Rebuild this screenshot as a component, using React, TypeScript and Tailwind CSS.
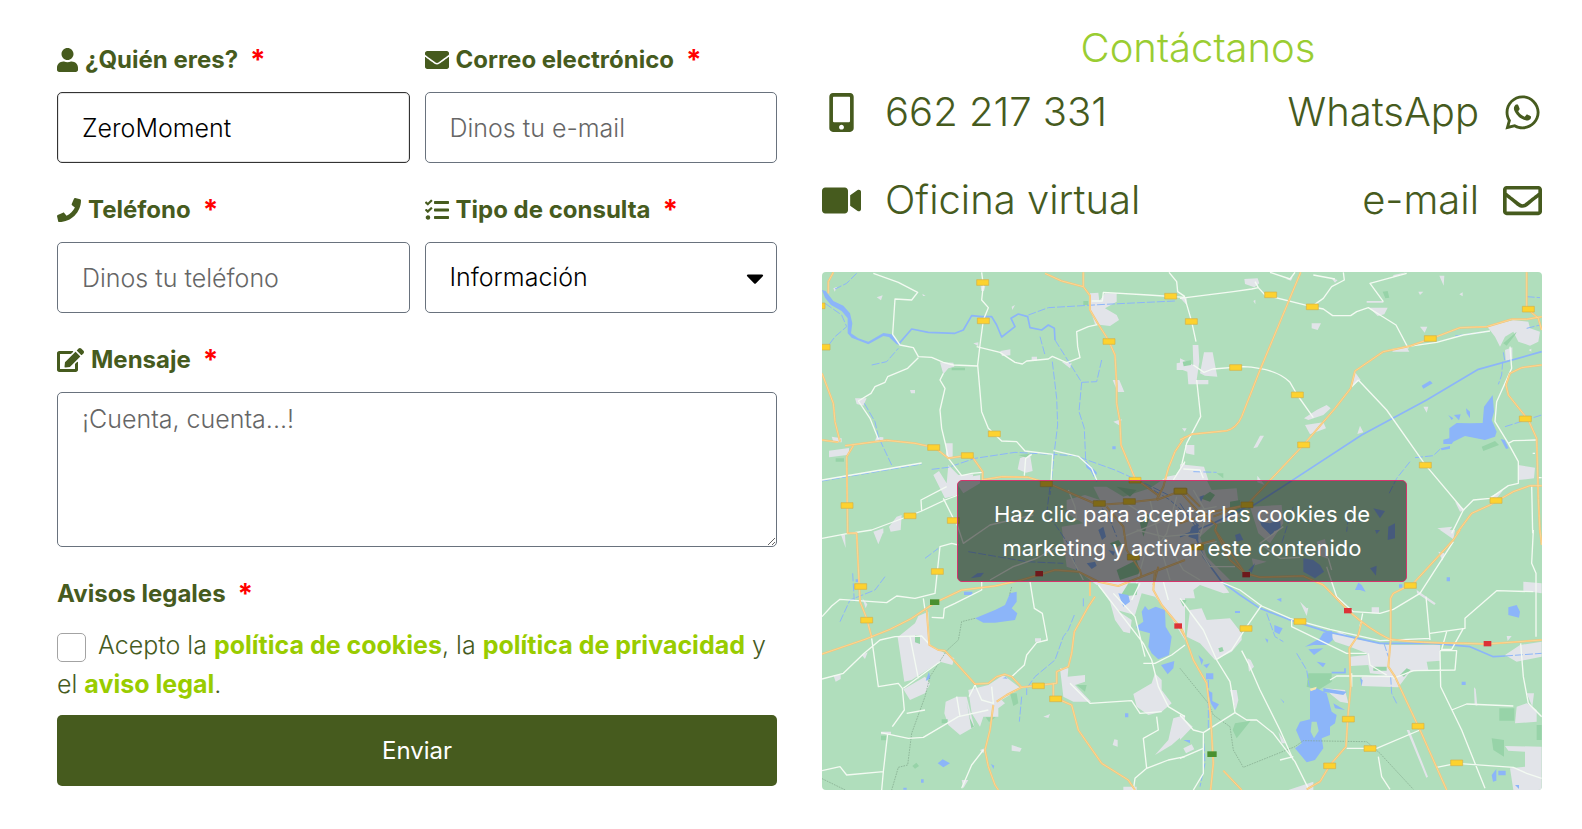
import { useState } from "react";
import type { FormEvent, ReactNode } from "react";
import {
  FaCaretDown,
  FaEdit,
  FaEnvelope,
  FaMobileAlt,
  FaPhone,
  FaRegEnvelope,
  FaTasks,
  FaUser,
  FaVideo,
  FaWhatsapp,
} from "react-icons/fa";

interface MapTile {
  id: string;
  at: string;
  urban: string;
  park: string;
  water: string;
  canal: string;
  rail?: string;
  road: string;
  highway: string;
  badges: [number, number][];
  red?: [number, number][];
  green?: [number, number][];
}

// the map is drawn tile by tile, every tile with its own origin
const tiles: MapTile[] = [
  {
    id: "nw",
    at: "translate(-21 -21)",
    urban:
      "M825 85L850 83L853 108L870 85L905 85V110L870 130L905 150L912 165L885 183L840 178L822 120ZM375 292L415 293L418 305L400 310L385 328ZM556 258l30-5v18l-25 2zM650 275h16v12h-16zM740 290l30 5-5 15zM893 345h20l15 36h-20zM1085 295l25-5v25h-25zM120 400h35l-10 22-20-5zM185 515l20 2v10h-25zM50 515l30 5v12l-25-2zM42 557l60-8v20l-60 8zM393 535h20v45l-20-5zM355 630L372 618L395 655L400 600L430 630L475 628L470 650L430 655L428 690L390 700ZM615 580l30-12 8 50-20 5-25-10zM185 97l18-6-5 15zM322 86l10 7h-8zM590 125l10-5-8 15zM285 375h15v10h-12zM245 755l15-5-3 45-30 5-5-15zM175 800l30-10v15zM1075 640L1110 590V660H1060ZM475 235l15-3v12zM497 62h14l-4 16h-8zM55 70l12-5-8 15zM895 470l25-8-5 20z",
    park: "M410 308h40v8h-40zM805 108h15v12h-15zM62 580h25v10h-25zM610 570l35-4-10 12z",
    water:
      "M21 75L32 78L55 108L85 122L105 145L112 175L108 205L130 220L160 230L205 204L230 208L258 240L245 238L222 216L205 213L160 238L110 218L98 205L98 160L80 138L48 120L30 98ZM808 585L845 622V630L815 608ZM892 544h10v9h-10z",
    canal:
      "M250 238L290 192L340 202L420 205L445 195L470 152L500 155L530 155L545 180L560 216L600 185L588 160L610 147L638 155L645 188L680 195L700 180L718 190L720 225",
    rail: "M720 225L800 352L792 440L808 490L812 585L845 650M21 648L320 597M350 613L400 607L480 580L600 562L780 572L900 615L1000 660L1060 690M712 290L725 400L728 480L718 560L705 690M640 150L700 128L870 118L1080 108M675 215L690 270M148 415L180 470L190 515L230 600M30 115L80 150L95 185L60 215L30 255M170 300L215 290L250 250M125 25L95 55L60 72M860 285L845 350L800 352",
    road: "M175 25L250 52L308 82L290 105L240 102L233 208L255 240L295 248L310 275L350 277L385 292L415 300L488 303M310 278L278 310L218 335L210 352L180 365L168 385L130 408L165 460L190 522M500 22L505 60L500 105L520 128L505 165L495 240L488 300L495 380L500 440L520 490L560 528L605 530L630 558L715 568M485 245L555 262L600 292L622 297L635 288L700 282L712 274L755 293L795 278L788 245L785 200L820 185L850 178M385 325L375 345L390 370L375 435L380 490L392 540L400 580L440 632L470 625L503 622M713 568L708 650M715 557L790 574L830 610L845 645M1062 22L1085 50L1088 80L1110 95M830 108H862L865 82L1000 90L1110 97M650 568L632 580L628 632M395 665L318 705L320 738L250 765L170 795L100 806M320 738L390 705L430 690M385 700L415 760M1110 590L1075 645M21 645L320 594",
    highway:
      "M55 22L40 50V85M21 325L55 415L60 470L75 530M21 525L70 532M90 542L215 526L300 535L360 548L400 580L450 572L475 580L503 620V648M115 542L95 575L98 806M690 25L740 48L805 65L825 92L825 135L850 178L880 225L900 270L905 360L905 415L915 470L918 540L960 640L1035 695M805 22V65M500 645L560 635L640 637L700 655L780 690L850 720L920 715L1025 703L1045 665L1060 610L1080 560L1110 515",
    badges: [[503, 52], [505, 167], [882, 229], [538, 506], [356, 547], [457, 571], [1067, 93], [960, 645], [96, 721], [285, 752], [415, 766], [12, 122], [27, 246], [694, 656], [853, 715], [943, 709], [1098, 678]],
  },
  {
    id: "ne",
    at: "translate(1074 -21)",
    urban:
      "M193 42l40-2 5 15-15 12-28-10zM318 42l20-5-5 10zM455 40l18 5-8 8zM640 30l40-8-40 15zM568 128l55 0-10 20-20 5zM560 108h50v5h-50zM778 32h15l-2 30zM395 175l28 0-10 20-18-5zM720 185h22l-8 18zM922 185L1000 165L1045 170L1050 190L1080 200L1075 230L1050 242L1015 230L1000 200L975 215L960 245L945 215ZM975 255l22-8v35l-20 5zM38 240L55 240L58 290L50 345L85 345V358L25 358L22 320L0 312V280L40 300ZM72 262L98 262L112 335L75 332L60 325ZM524 320l18 25-28 18zM635 252l45-6 8 14-50 0zM372 460L410 435L440 420L452 430L430 450L385 465ZM375 480L430 472L438 490L390 508ZM540 482l10 20-18 5zM220 550l20-38 12 0-20 35zM15 540h28v30l-25-5zM0 598L72 605L85 645H0ZM1015 600L1065 608L1062 640L1015 645ZM825 710l30 25-15 5zM930 695l40-20-20 25zM772 790l45-5-15 20zM0 98l20 2v20zM730 425h15l-5 18zM232 632l22 28-22-8zM715 80h15l-10 10zM838 88l10-6v12zM1046 255l8-4v9zM220 108l6-4v14zM6 490h14l-6 10z",
    park: "M905 545L945 528L957 540L910 558ZM608 80l15-2 5 20-12 2zM8 290l25-4v14l-22 4zM970 235l40-35-5 10-25 32z",
    water:
      "M808 490L830 474L870 475L908 474L912 425L938 390L942 440L935 465L950 500L945 515L915 525L855 513L820 530L815 537L790 537V524L808 520ZM725 362l25-15 8 8-28 16zM782 550l28-7v8l-25 5zM858 430l12 10v20l-10-15zM805 450l15 10-5 5zM822 450l20-2-5 18zM962 522l12 3 12 25-8 2z",
    canal: "M205 730L225 718L300 670L545 510L740 405L895 313L1085 260",
    rail: "M968 290L965 330L955 358M970 262L975 290M975 485L1085 450M690 590L650 640L625 690M705 578L760 572L785 548M825 213L920 200M1040 190L1080 180M40 620L110 622M1040 95L1080 98",
    road: "M0 100L160 80L215 72L235 68L225 50M235 68L255 90L395 125L430 132L458 152H512L530 140L565 128L600 150L648 180L685 250M270 22L330 42L345 22M395 125L430 100L455 65L493 45L490 22M400 30L465 42M680 25L570 55L610 110M15 100L35 170L48 230M50 345L62 455L20 535L5 600M98 312L190 305Q290 310 330 352L352 390L400 458M535 345L620 435L735 598L850 735L815 805M515 365L535 345M680 245L770 232L850 210L930 198M990 245L995 310L950 410L945 470L985 535L1015 590V655L985 662L930 700L880 705L850 735M985 535L1000 527L1068 525M1055 660L1058 805M40 300L72 322L98 312M1065 565H1058M1075 638h10M10 612L60 615L70 640",
    highway:
      "M362 22L240 315L185 455Q170 490 140 497L35 508L0 525M830 805L875 745L930 720L1000 680L1050 662H1085M1040 22V130L1075 160L1085 195M1085 155L1040 163L995 163L920 185L840 188L770 215L690 243L610 260L525 318L512 370L465 430L372 538L205 715L100 755M1085 300L1025 308L990 325L978 360L985 390L1045 465L1070 520L1075 700L1080 805",
    badges: [[272, 89], [397, 125], [34, 169], [167, 307], [352, 389], [371, 539], [751, 220], [1045, 132], [1036, 461], [736, 600], [948, 706], [201, 719]],
  },
  {
    id: "centre-w",
    at: "translate(384 594)",
    urban:
      "M405 75L450 90L430 50L470 50L520 80L600 55L650 20L750 0V345H440L380 300L350 290L335 170L400 160L350 130V90ZM20 40L60 20L90 15V40L40 70Z",
    park: "M500 300l60-30 12 40-62 20zM500 50l60 10-20 20zM570 160l20-30 10 10-20 60zM480 220l25-10 10 12-20 15zM640 125l25 15-8 12z",
    water: "M445 180l15-10 8 30-12 10zM62 325l20-15 20-2-10 12zM410 280l25-5 5 12-15 10zM475 240l20 5-5 12zM725 170l20-10v50l-30-10z",
    canal: "",
    rail: "M300 50L290 130L320 170L360 230L380 300M440 90L480 150L500 200M560 30L660 90L750 170M55 245L230 275L340 280",
    road: "M20 160L40 220L120 165L250 135M120 330L190 290L260 265L330 225M355 60L375 110L380 150M560 180L640 200L750 190M600 90L640 260L660 330M520 200L620 160L700 120M640 200L700 300L750 330M590 230L560 340M530 100L620 160M680 80L650 190L600 260M350 235L400 330",
    highway: "M470 110L520 170L530 240L570 300L575 320M620 90L700 60L750 110M610 345L625 290",
    badges: [[690, 63], [550, 261]],
  },
  {
    id: "centre-e",
    at: "translate(1074 594)",
    urban:
      "M0 0L70 10L95 60L170 55L180 140L100 165L60 200L80 260L150 330L0 345ZM210 110L305 105L310 160L270 220L235 190ZM410 215l25-8 10 60-25-10zM215 265l45 10-40 12z",
    park: "M60 85l30-20 15 10-15 20zM110 10l20 0 0 15zM150 95l30-5v40l-30 5z",
    water: "M240 155l30 5 30-12 3 30-20 5-8 15-30-30zM165 195l15-5 10 20-20 5zM580 115l35 8-15 22zM625 170l20-10v45l-22 5zM585 180l15 0-10 12zM58 80l15-5-10 20zM570 295l20-8-2 30zM205 300l20-20-10 28z",
    canal: "M0 200L100 160L200 110M40 180L70 260L125 335",
    rail: "M340 110L305 220M0 100L60 190M505 140L500 185",
    road: "M40 60L80 130L60 200M0 130L110 110M110 215L50 225L90 290L165 290M310 170L240 220L300 265L360 262M445 265L455 300",
    highway: "M0 65L60 130L110 165L105 180L195 310M30 230L105 210M0 160L100 125L200 105",
    badges: [[1, 63], [52, 231]],
  },
  {
    id: "sw",
    at: "translate(-21 774)",
    urban:
      "M175 5h30l-15 38zM78 14h12l2 40zM248 322L300 280L310 258L340 245L345 345L390 370L418 385L412 405L375 395L290 450L268 455ZM265 478L330 440L345 462L330 490L285 510ZM142 205l10 30 5-12zM140 375l18-8-8 20zM55 435h22v12l-15 8zM392 515L425 500L455 500L478 590L435 615L400 585L388 550ZM460 480L520 465L565 435L617 475L560 510L570 520L550 535V560L505 560L495 590L470 550ZM735 415H760L758 440L810 435V455L780 465L828 515L775 515L745 500ZM955 492L1010 460L1020 430L1040 450L1040 480L1070 520L1040 545L1000 555L965 530ZM1075 565L1110 555V610L1070 645L1020 675L1060 630ZM590 645l30 10-5 10-25-3zM898 628l10 2v20l-15-5zM685 560l20-8-5 12zM495 660l15-5-5 15zM660 325h18v10h-18zM850 165L890 165L905 240L950 270L945 310L925 305L900 270L885 215ZM890 165L1110 155V330L1060 250L1020 200L980 190L960 255L905 240ZM198 605h30v8h-30zM925 770h40v15h-40zM440 750h20l-15 25z",
    park: "M300 315l15 2v25l-15-5zM940 160h30l-5 35-50 5zM585 490h20l5 30-15 8zM785 465h30l-5 20zM455 515l10 50 12 25-8 5zM292 708l12-10 8 10-12 8zM380 568h18v12h-18zM198 617h18v14h-18zM512 562h30l-20 14z",
    water:
      "M480 265L540 240L570 225L585 190L605 185V215L590 235L607 250L600 270L540 278L505 278ZM447 185h25v10h-25zM963 290L985 275L980 245L990 228L1000 240L1022 230L1050 240L1052 290L1070 320L1062 375L1030 388L1010 370L1000 350L1005 310L970 300ZM1038 405l40-12-3 22-17 18zM910 190l30 5 5 20-20 15zM368 700l15-12 22 12-20 12zM930 550h10v12h-10zM342 425l4 20-14 8zM528 702l10 5-3 10zM562 445l10-4 6 5zM318 748h8v10h-8zM265 773h10v6h-10zM122 148h12v8h-12z",
    canal: "",
    rail: "M778 255L760 300L745 320L720 390L660 440L635 475M620 500L613 575M635 475V495M113 130L118 215M210 140L180 180M75 275L105 210L180 180M330 85L370 55M805 205V235",
    road: "M21 25L100 10M21 260L50 228L75 208L215 218L245 198L300 205L360 190L375 50L410 40L430 45M350 262L385 264L388 235L420 220L500 180V155M325 205L330 240M21 447L85 430L145 372L195 330L240 320L320 318L345 345M170 325L190 470L250 460L262 475L268 540L232 590M265 475L375 395M285 320L310 445M645 155L658 235L682 250L697 330L665 338L635 375L628 405L590 440M198 608L280 625L325 622L400 578L430 560L520 540M218 610L205 725L200 780M205 725L95 735L75 710L21 722M480 465L500 510L535 520L530 470M462 500L480 465M425 500L435 560M505 660L470 705L440 775M275 550L330 540M765 460L825 520L950 512L975 550L1040 545M850 165L900 230L985 340L1010 390L1030 470L1060 530L1110 560M985 400H1020L1070 375L1110 345M1025 560L1030 600L985 625L995 715L960 745L955 780M995 715L1060 690L1110 680M895 190L960 260L990 380M950 210L975 160M1045 155L1060 210",
    highway:
      "M21 372L150 328L225 298L290 265L360 218L440 180L540 168L620 150L720 120L790 125L850 155L910 168L1000 132L1110 90M98 10H125L135 215L155 265L170 322M335 240L343 345L370 360L390 362L480 462L520 460L545 440L570 433L590 440L620 472L725 460V425L760 410L770 370L778 305L820 230L840 200M715 460V500M825 155V198M620 472L575 495L545 515M535 525L525 600L510 660L520 710L540 765L550 780M735 510L770 525L790 600L860 700L940 750L960 780M1020 120L1015 180L1040 225L1090 285L1110 320",
    badges: [[367, 124], [137, 169], [155, 270], [670, 467], [722, 506]],
    red: [[673, 131], [1090, 288]],
    green: [[359, 216]],
  },
  {
    id: "se",
    at: "translate(1074 774)",
    urban:
      "M0 155H125L148 188L130 190L60 165L40 180L45 205L0 205ZM30 240L65 235L80 270L150 265L185 310L185 330L155 365L105 390L60 340L20 320ZM202 385l10 5 10 20-15 15zM150 480h20l5 30-8 30zM0 555L38 590L0 630ZM10 655l25-12 8 15-25 12zM450 315L480 305L520 325L620 345L780 345L780 392L740 395L745 420L690 425L655 472L545 468V440L620 435L570 430L565 405L512 408L510 380L560 375V370L510 350L465 335ZM360 215l20 20 5-2-5 25zM575 232h22v18h-22zM975 375L1020 345L1085 335V380L1010 395ZM435 475L495 480L505 520L480 515L455 495ZM1030 155L1085 160V190L1030 182ZM780 0h45l-5 28zM775 65l18 5-5 22zM710 180l57 40-4 5-52-35zM1010 530L1040 520L1070 540V575L1005 580ZM975 648L1085 650V780H1000L990 715L1035 710V665L985 662ZM882 472l5 5 5 50-8-2zM980 318h15l-12 15zM680 600l8 0 56 140-5 3zM325 780L400 755V780ZM295 605l22 35-12 0zM1040 490l22 0-5 40z",
    park: "M385 430L455 430L455 455L415 480L380 470ZM958 535H1003V572H958ZM165 580L212 572L170 625L158 600ZM935 625L972 630V680L940 660ZM1070 585h15v45h-15zM580 410h40v12h-40zM115 355l12-4 4 12-12 4zM660 435l20-20 12 5-20 20zM0 210l20 0-10 20z",
    water:
      "M390 480L410 475L440 490L455 545L470 555L465 580L450 590V615L425 625L430 655L405 690L380 697L345 655L365 640L348 600L360 575L390 568ZM375 350L420 325L430 308L456 302L458 330L440 345L400 345ZM385 358l45-3-28 20zM985 232L1010 225L1020 245L1017 263L985 255ZM283 285l25 10-10 18-15-8zM525 180L535 158L545 165L557 185L540 180ZM78 430h22v18h-22zM82 480l15 8 0 25 20 10-12 18-12-20zM55 375l15 15-5 15zM300 505l12 10v5zM70 405l20-5-10 15zM800 142h10v12h-10zM845 455h12v10h-12zM955 722h22v14h-22zM935 735l14-18v35l-10 3zM165 243h15v6h-15zM10 630h20v10zM410 395l27 5-8 12zM370 85L400 90L420 105L432 125L405 145L370 125ZM430 475l70 10-10 10-60-10zM460 520l35 20-30-5zM540 443l8 8-3 18zM290 208l14-4v12zM255 325l10 4-3 10zM1005 765h12v12zM657 163h10v10h-10z",
    canal: "M125 155L180 195L240 235L325 268L440 305L600 340L760 340L870 350L940 380L975 378M455 428H495V415",
    rail: "M260 250L285 320L310 335M70 610L75 700L60 770M85 450V600M612 340L625 380M350 370L380 420L388 470M632 440L635 490L650 520M975 378L1085 370",
    road: "M0 205L70 300L110 390L150 455L165 548L200 570L230 570L280 610L345 695L385 775M120 155L180 180L245 228L330 265L450 298L600 332L750 325M335 270V290L500 370H560M245 225L200 290L155 360L110 388M185 362L205 400L240 480L300 600L340 690M165 548L70 608L40 600L0 555M70 610V730L40 780M440 110L470 200L520 245L600 250L640 238L720 190L820 35M548 250L540 290M738 200L750 330M750 310L855 295L855 265L950 182L1060 185M800 305L785 358H815L850 295M1060 0L1055 100L1068 130V320M780 362H830L825 420L700 422L640 445M780 362L782 470L845 600L915 775M815 540L860 522L1000 528M1022 340L1030 440L1045 520L1085 560M500 655H590L720 600M595 680L605 740L630 778M770 712L830 700L1000 712L1040 730L1085 745M450 450L470 438L560 438L640 440M515 430V470M565 370L570 405L620 435M0 685L70 655M300 690L340 680",
    highway:
      "M105 0L150 90L195 130L240 142L370 138L430 165L505 242Q570 300 630 328Q720 340 850 340L920 342L1085 330M0 285L15 320L40 390L80 460L92 560L100 700L92 780M840 0L820 30L700 160L640 190L632 205V330L625 410L645 440L720 600L800 780M545 275L535 315L508 355L512 470L503 570L498 650L450 705L420 755L380 778M130 722L185 780M1080 0L1085 45",
    badges: [[691, 166], [360, 274], [198, 295], [505, 567], [714, 588], [570, 655], [449, 707], [830, 698]],
    red: [[504, 242], [199, 134], [923, 341]],
    green: [[96, 672]],
  },
];

const borders =
  "M459 1039L419 1049L409 1104L374 1136L324 1214L309 1274L269 1384L257 1479L229 1486L209 1554M569 945L562 970M1074 1189L1159 1294L1174 1329L1224 1364L1234 1434L1264 1486L1419 1424L1444 1406L1634 1409L1674 1444L1774 1552M0 1520L70 1554";

function AreaMap() {
  return (
    <svg
      viewBox="0 0 2160 1554"
      className="block h-auto w-full rounded bg-[#b0debc]"
      fill="none"
      strokeLinejoin="round"
      aria-hidden="true"
    >
      {tiles.map((t) => (
        <g key={t.id} transform={t.at}>
          <path d={t.urban} fill="#e2e4e9" />
          <path d={t.park} fill="#97d3a8" />
        </g>
      ))}
      {tiles.map((t) => (
        <g key={t.id} transform={t.at}>
          <path d={t.water} fill="#8cb5f9" />
          <path d={t.canal} stroke="#8cb5f9" strokeWidth="5" />
          <path d={t.rail} stroke="#8cb5f9" strokeWidth="3" strokeDasharray="24 6" />
        </g>
      ))}
      <path d="M1469 1349h15l6 28-14 22-10-20z" fill="#b0debc" />
      <path d="M1464 1250l20-6-2 8-16 6z" fill="#f5e7b0" />
      <path d={borders} stroke="#7fa58a" strokeWidth="2" strokeDasharray="5 3" />
      {tiles.map((t) => (
        <path key={t.id} transform={t.at} d={t.road} stroke="#f3faf2" strokeWidth="4" />
      ))}
      {tiles.map((t) => (
        <g key={t.id} transform={t.at}>
          <path d={t.highway} stroke="#f6c478" strokeWidth="6" />
          <path d={t.highway} stroke="#fde0a0" strokeWidth="2" />
        </g>
      ))}
      {tiles.map((t) => (
        <g key={t.id} transform={t.at}>
          {t.badges.map(([x, y]) => (
            <rect key={`${x}-${y}`} x={x - 18} y={y - 8} width="36" height="17" fill="#fdd22f" stroke="#d3b04a" strokeWidth="2" />
          ))}
          {t.red?.map(([x, y]) => (
            <rect key={`${x}-${y}`} x={x - 12} y={y - 8} width="23" height="16" fill="#dc3237" />
          ))}
          {t.green?.map(([x, y]) => (
            <rect key={`${x}-${y}`} x={x - 14} y={y - 8} width="28" height="17" fill="#4a9130" />
          ))}
        </g>
      ))}
    </svg>
  );
}

function FieldLabel({ htmlFor, icon, children }: { htmlFor: string; icon?: ReactNode; children: ReactNode }) {
  return (
    <label htmlFor={htmlFor} className="mb-[13px] flex h-[39px] items-center text-[24px] font-bold">
      {icon && <span className="mr-[7px]">{icon}</span>}
      {children}
      <span className="ml-3 text-[28px] text-[#ff0000]">*</span>
    </label>
  );
}

const fieldClass =
  "block h-[71px] w-full rounded-[5px] border border-[#69727d] bg-white px-6 text-[25px] font-light text-black outline-none placeholder:text-[#666666] focus:border-[#333333]";

const linkClass = "font-bold text-[#99cc00]";

export default function App() {
  const [name, setName] = useState("ZeroMoment");
  const [email, setEmail] = useState("");
  const [phone, setPhone] = useState("");
  const [topic, setTopic] = useState("informacion");
  const [message, setMessage] = useState("");
  const [accepted, setAccepted] = useState(false);

  const handleSubmit = (e: FormEvent) => {
    e.preventDefault();
  };

  return (
    <main className="grid grid-cols-2 gap-[45px] bg-white pr-10 pl-[57px] font-[Inter,sans-serif] text-[#465b1e]">
      <form onSubmit={handleSubmit} className="pt-10 pb-10">
        <div className="grid grid-cols-2 gap-x-[15px] gap-y-[27px]">
          <div>
            <FieldLabel htmlFor="name" icon={<FaUser className="h-6 w-[21px]" />}>
              ¿Quién eres?
            </FieldLabel>
            <input
              id="name"
              type="text"
              value={name}
              onChange={(e) => setName(e.target.value)}
              className="block h-[71px] w-full rounded-[5px] border border-[#333333] bg-white px-6 text-[25px] font-light text-black shadow-[inset_0_0_0_1px_rgba(0,0,0,0.1)] outline-none"
            />
          </div>
          <div>
            <FieldLabel htmlFor="email" icon={<FaEnvelope className="size-6" />}>
              Correo electrónico
            </FieldLabel>
            <input
              id="email"
              type="email"
              placeholder="Dinos tu e-mail"
              value={email}
              onChange={(e) => setEmail(e.target.value)}
              className={fieldClass}
            />
          </div>
          <div>
            <FieldLabel htmlFor="phone" icon={<FaPhone className="size-6" />}>
              Teléfono
            </FieldLabel>
            <input
              id="phone"
              type="tel"
              placeholder="Dinos tu teléfono"
              value={phone}
              onChange={(e) => setPhone(e.target.value)}
              className={fieldClass}
            />
          </div>
          <div>
            <FieldLabel htmlFor="topic" icon={<FaTasks className="size-6" />}>
              Tipo de consulta
            </FieldLabel>
            <div className="relative">
              <select
                id="topic"
                value={topic}
                onChange={(e) => setTopic(e.target.value)}
                className={`${fieldClass} appearance-none`}
              >
                <option value="informacion">Información</option>
              </select>
              <FaCaretDown className="pointer-events-none absolute top-1/2 right-2 size-7 -translate-y-1/2 text-black" />
            </div>
          </div>
          <div className="col-span-2">
            <FieldLabel htmlFor="message" icon={<FaEdit className="h-6 w-[27px]" />}>
              Mensaje
            </FieldLabel>
            <textarea
              id="message"
              placeholder="¡Cuenta, cuenta...!"
              value={message}
              onChange={(e) => setMessage(e.target.value)}
              className="block h-[155px] w-full resize-y rounded-[5px] border border-[#69727d] bg-white px-6 py-2 text-[25px] leading-9 font-light text-black outline-none placeholder:text-[#666666]"
            />
          </div>
          <div className="col-span-2">
            <FieldLabel htmlFor="accept">Avisos legales</FieldLabel>
            <p className="text-[25px] leading-[39px] font-light">
              <input
                id="accept"
                type="checkbox"
                checked={accepted}
                onChange={(e) => setAccepted(e.target.checked)}
                className="mr-3 size-[29px] appearance-none rounded-[5px] border border-[#a3a3a3] bg-white align-middle checked:bg-[#465b1e]"
              />
              <label htmlFor="accept">Acepto la </label>
              <a href="#cookies" className={linkClass}>política de cookies</a>, la{" "}
              <a href="#privacidad" className={linkClass}>política de privacidad</a> y el{" "}
              <a href="#aviso-legal" className={linkClass}>aviso legal</a>.
            </p>
          </div>
        </div>
        <button type="submit" className="mt-[11px] h-[71px] w-full rounded-[5px] bg-[#465b1e] text-[24px] text-white">
          Enviar
        </button>
      </form>

      <section className="pt-6">
        <h2 className="pl-8 text-center text-[40px] leading-[48px] font-light text-[#9acd32]">Contáctanos</h2>
        <div className="mt-4 grid grid-cols-[auto_auto] justify-between gap-y-10 text-[40px] leading-[48px] font-light">
          <a href="tel:662217331" className="flex items-center gap-6">
            <FaMobileAlt className="size-[39px]" />
            662 217 331
          </a>
          <a href="#whatsapp" className="flex items-center justify-end gap-6">
            WhatsApp
            <FaWhatsapp className="size-[39px]" />
          </a>
          <a href="#oficina" className="flex items-center gap-6">
            <FaVideo className="size-[39px]" />
            Oficina virtual
          </a>
          <a href="#e-mail" className="flex items-center justify-end gap-6">
            e-mail
            <FaRegEnvelope className="size-[39px]" />
          </a>
        </div>
        <div className="relative mt-12">
          <AreaMap />
          <div className="absolute inset-0 flex items-center justify-center">
            <button
              type="button"
              className="w-5/8 rounded-[5px] border border-[#d6336c] bg-black/50 px-6 py-4 text-[22px] leading-[34px] text-white"
            >
              Haz clic para aceptar las cookies de marketing y activar este contenido
            </button>
          </div>
        </div>
      </section>
    </main>
  );
}
